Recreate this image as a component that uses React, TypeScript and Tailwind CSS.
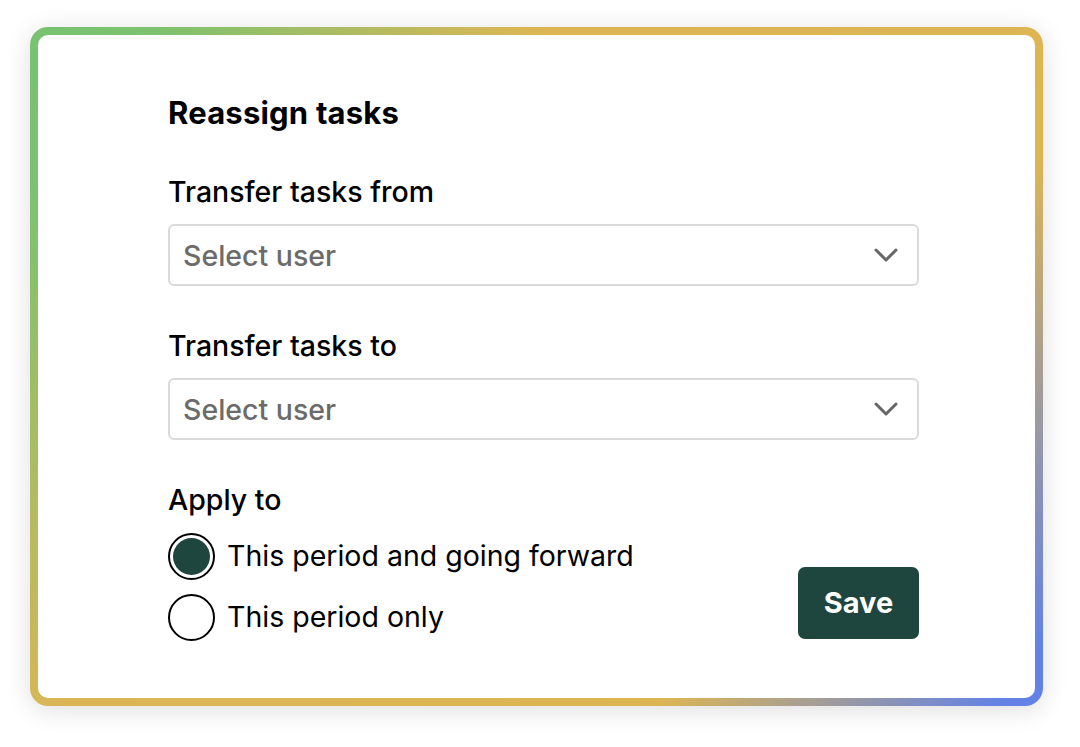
export default function App() {
  return (
    <div className="min-h-screen bg-white pl-[30px] pt-[27px] font-['Inter',sans-serif]">
      <div className="h-[679px] w-[1013px] rounded-[18px] bg-[linear-gradient(125deg,#78c272_0%,#7cc270_8%,#dcb655_34%,#ddb553_74%,#6282e6_97%)] p-[8px] shadow-[0_4px_26px_rgba(0,0,0,0.13)]">
        <div className="h-full rounded-[10px] bg-white pl-[130px] pt-[63px]">
          <div className="w-[751px]">
            <h1 className="text-[31px] font-bold leading-[30px] tracking-[0.2px] text-black">Reassign tasks</h1>

            <Field label="Transfer tasks from" className="mt-[49px]" />
            <Field label="Transfer tasks to" className="mt-[45px]" />

            <div className="mt-[45px] text-[28.5px] font-medium leading-[30px] text-black">Apply to</div>
            <div className="mt-[17px] flex items-end justify-between">
              <div className="flex flex-col gap-[13px]">
                <Radio checked label="This period and going forward" />
                <Radio label="This period only" />
              </div>
              <button className="mb-[2px] h-[72px] w-[121px] rounded-[7px] bg-[#1e453e] text-[29px] font-bold text-white">Save</button>
            </div>
          </div>
        </div>
      </div>
    </div>
  );
}

function Field({ label, className }: { label: string; className?: string }) {
  return (
    <div className={className}>
      <div className="text-[28.5px] font-medium leading-[30px] text-black">{label}</div>
      <div className="mt-[17px] flex h-[62px] items-center justify-between rounded-[6px] border-2 border-[#dadada] pl-[13px] pr-[19px]">
        <span className="pt-[2px] text-[28.5px] font-medium leading-none text-[#6b6b6b]">Select user</span>
        <svg width="24" height="14" viewBox="0 0 24 14" fill="none">
          <path d="M2 2l10 10L22 2" stroke="#666" strokeWidth="3" strokeLinecap="round" strokeLinejoin="round" />
        </svg>
      </div>
    </div>
  );
}

function Radio({ label, checked }: { label: string; checked?: boolean }) {
  return (
    <label className="flex h-[48px] items-center gap-[12px]">
      <span className="flex h-[47px] w-[47px] items-center justify-center rounded-full border-2 border-black bg-white">
        {checked && <span className="h-[37px] w-[37px] rounded-full bg-[#1e453e]" />}
      </span>
      <span className="text-[28.5px] leading-none text-black">{label}</span>
    </label>
  );
}
